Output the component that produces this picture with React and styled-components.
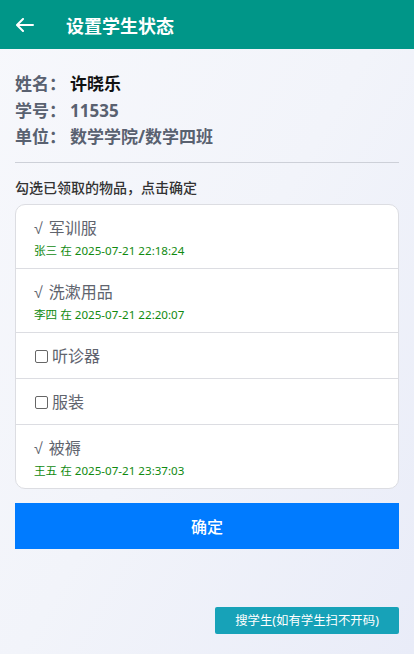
import React from 'react'
import styled, { createGlobalStyle } from 'styled-components'

const Global = createGlobalStyle`
  html, body {
    margin: 0;
    padding: 0;
  }
  body {
    font-family: "Noto Sans", "Noto Sans CJK SC", sans-serif;
    background: linear-gradient(120deg, #f7f8fc 0%, #f2f4fa 50%, #e9ecf8 100%);
    min-height: 654px;
  }
`

const Page = styled.div`
  min-height: 654px;
  display: flex;
  flex-direction: column;
`

const Header = styled.div`
  height: 49px;
  background: #009688;
  display: flex;
  align-items: center;
  padding-left: 16px;
  color: #fff;
`

const Back = styled.span`
  display: flex;
  width: 18px;
  margin-right: 32px;
`

const Title = styled.h1`
  margin: 0;
  font-size: 18px;
  font-weight: 700;
`

const Body = styled.div`
  padding: 0 15px;
  display: flex;
  flex-direction: column;
`

const Info = styled.div`
  padding: 22px 0 11px;
  border-bottom: 1px solid #cdd0d8;
`

const InfoLine = styled.div`
  display: flex;
  font-size: 17px;
  font-weight: 700;
  line-height: 26.5px;
  color: #596170;
`

const Label = styled.span`
  width: 55px;
  flex-shrink: 0;
`

const Value = styled.span`
  color: ${p => (p.$dark ? '#111' : '#596170')};
`

const Hint = styled.div`
  font-size: 14px;
  font-weight: 500;
  color: #333;
  margin: 14px 0 7px;
`

const Card = styled.div`
  background: #fff;
  border: 1px solid #dcdde2;
  border-radius: 10px;
  overflow: hidden;
`

const Row = styled.div`
  padding: ${p => (p.$done ? '13px 18px 9px' : '13px 18px 11px')};
  & + & {
    border-top: 1px solid #dcdde2;
  }
`

const ItemName = styled.label`
  display: flex;
  align-items: center;
  font-size: 16px;
  color: #60646e;
  line-height: 21px;
`

const Box = styled.span`
  width: 11px;
  height: 11px;
  border: 1px solid #666;
  border-radius: 2px;
  margin-right: 4px;
  margin-left: 1px;
`

const Check = styled.span`
  font-family: "Liberation Sans", sans-serif;
  margin-right: 6px;
`

const Stamp = styled.div`
  font-size: 11.6px;
  color: #108a10;
  margin-top: 4px;
  line-height: 16px;
`

const Confirm = styled.button`
  margin-top: 14px;
  height: 46px;
  border: none;
  background: #007bff;
  color: #fff;
  font-family: inherit;
  font-size: 16px;
  font-weight: 500;
  width: 100%;
`

const Footer = styled.div`
  display: flex;
  justify-content: flex-end;
  margin-top: 58px;
`

const Search = styled.button`
  width: 184px;
  height: 27px;
  border: none;
  border-radius: 2px;
  background: #17a2b8;
  color: #fff;
  font-family: inherit;
  font-size: 12.4px;
  padding: 0;
`

const items = [
  { name: '军训服', by: '张三', at: '2025-07-21 22:18:24' },
  { name: '洗漱用品', by: '李四', at: '2025-07-21 22:20:07' },
  { name: '听诊器' },
  { name: '服装' },
  { name: '被褥', by: '王五', at: '2025-07-21 23:37:03' },
]

const App = () => {
  return (
    <Page>
      <Global />
      <Header>
        <Back>
          <svg width="18" height="14" viewBox="0 0 18 14" fill="none" stroke="#fff" strokeWidth="2" strokeLinecap="round" strokeLinejoin="round">
            <path d="M17 7H2M7 1L1 7l6 6" />
          </svg>
        </Back>
        <Title>设置学生状态</Title>
      </Header>
      <Body>
        <Info>
          <InfoLine><Label>姓名：</Label><Value $dark>许晓乐</Value></InfoLine>
          <InfoLine><Label>学号：</Label><Value>11535</Value></InfoLine>
          <InfoLine><Label>单位：</Label><Value>数学学院/数学四班</Value></InfoLine>
        </Info>
        <Hint>勾选已领取的物品，点击确定</Hint>
        <Card>
          {items.map(it => (
            <Row key={it.name} $done={!!it.by}>
              <ItemName>
                {it.by ? <Check>√</Check> : <Box />}
                {it.name}
              </ItemName>
              {it.by && <Stamp>{it.by} 在 {it.at}</Stamp>}
            </Row>
          ))}
        </Card>
        <Confirm>确定</Confirm>
        <Footer>
          <Search>搜学生(如有学生扫不开码)</Search>
        </Footer>
      </Body>
    </Page>
  )
}

export default App
